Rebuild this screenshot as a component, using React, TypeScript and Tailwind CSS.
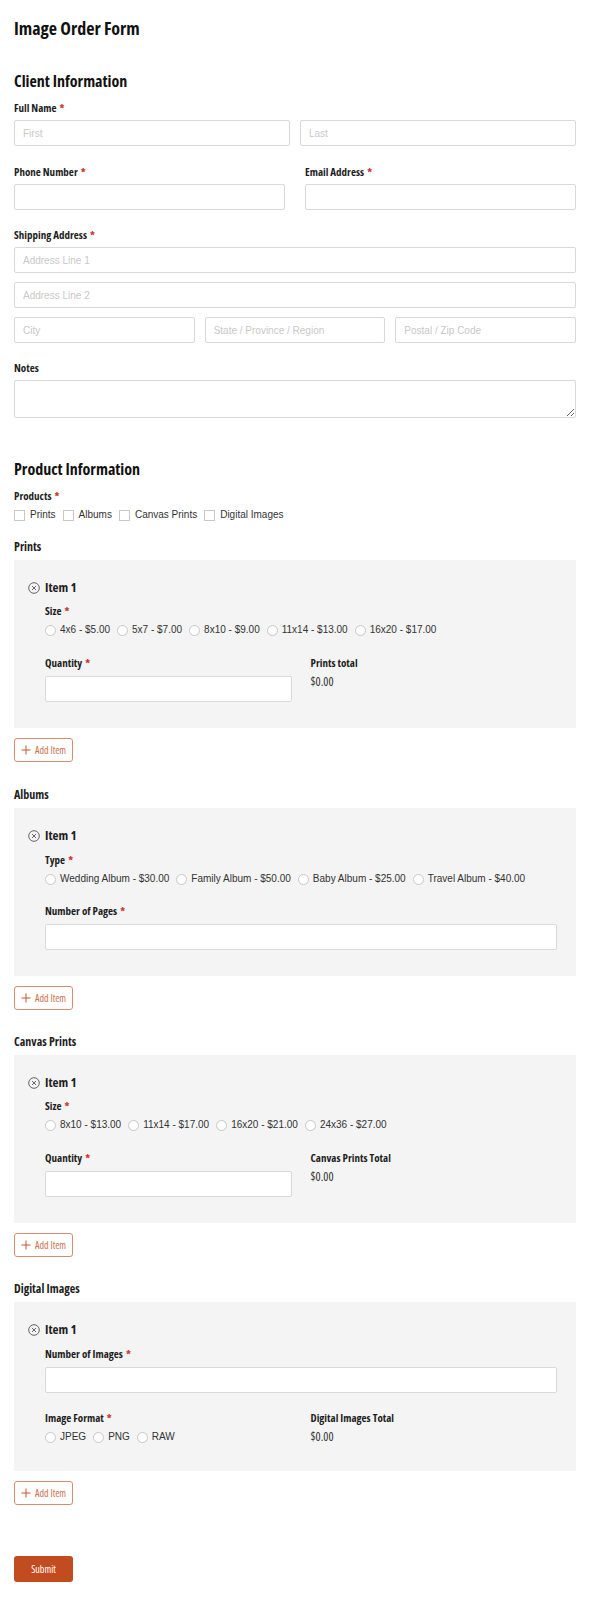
import React from "react";

const cond = "font-['Open_Sans','Liberation_Sans',sans-serif] font-stretch-[75%]";
const arial = "font-['Liberation_Sans','Arial',sans-serif]";

function Label({ text, required = false, className = "" }: { text: string; required?: boolean; className?: string }) {
  return (
    <div className={`${cond} font-bold text-[11px] leading-4 text-[#1e1e1e] ${className}`}>
      {text}
      {required && <span className="text-[#d0312d] ml-[3px]">*</span>}
    </div>
  );
}

function TextInput({ placeholder = "", className = "" }: { placeholder?: string; className?: string }) {
  return (
    <input
      placeholder={placeholder}
      className={`${arial} block w-full h-[26px] bg-white border border-[#d9d9d9] rounded-[2px] px-2 text-[10px] text-[#333] placeholder:text-[#c8c8c8] outline-none ${className}`}
    />
  );
}

function Radio({ label }: { label: string }) {
  return (
    <label className={`${arial} flex shrink-0 items-center whitespace-nowrap text-[10px] leading-[14px] text-[#333] mr-[7px]`}>
      <span className="w-[11px] h-[11px] rounded-full border border-[#c8c8c8] bg-white mr-[4px]" />
      {label}
    </label>
  );
}

function Checkbox({ label }: { label: string }) {
  return (
    <label className={`${arial} flex shrink-0 items-center whitespace-nowrap text-[10px] leading-[14px] text-[#333] mr-[7px]`}>
      <span className="w-[11px] h-[11px] border border-[#c8c8c8] bg-white mr-[5px]" />
      {label}
    </label>
  );
}

function ItemHeader() {
  return (
    <div className="flex items-center h-[18px] pl-[14px]">
      <svg width="12" height="12" viewBox="0 0 12 12" className="mr-[5px]">
        <circle cx="6" cy="6" r="5.3" fill="none" stroke="#555" strokeWidth="0.9" />
        <path d="M4 4 L8 8 M8 4 L4 8" stroke="#555" strokeWidth="0.9" />
      </svg>
      <span className={`${cond} font-bold text-[13px] text-[#1e1e1e]`}>Item 1</span>
    </div>
  );
}

function Total({ label }: { label: string }) {
  return (
    <div>
      <Label text={label} />
      <div className={`${cond} text-[12px] leading-4 text-[#333] mt-[3px]`}>$0.00</div>
    </div>
  );
}

function Panel({ children }: { children: React.ReactNode }) {
  return (
    <div className="bg-[#f4f4f4] pt-[19px] pb-[26px]">
      <ItemHeader />
      <div className="pl-[31px] pr-[19px]">{children}</div>
    </div>
  );
}

function AddItem() {
  return (
    <button className="mt-[10px] flex items-center h-[24px] px-[6px] border border-[#d98b6f] rounded-[3px] bg-white">
      <svg width="10" height="10" viewBox="0 0 10 10" className="mr-[4px]">
        <path d="M5 0.5 V9.5 M0.5 5 H9.5" stroke="#c9552e" strokeWidth="1" />
      </svg>
      <span className={`${cond} text-[10px] text-[#c8704f]`}>Add Item</span>
    </button>
  );
}

function SectionTitle({ text, className = "" }: { text: string; className?: string }) {
  return <div className={`${cond} font-bold text-[12px] leading-4 text-[#1e1e1e] mb-[5px] ${className}`}>{text}</div>;
}

export default function App() {
  return (
    <div className="w-[590px] bg-white px-[14px] pt-[16px] pb-[16px] box-border">
      <h1 className={`${cond} font-bold text-[18px] leading-6 text-[#111]`}>Image Order Form</h1>

      <h2 className={`${cond} font-bold text-[16px] leading-[22px] text-[#111] mt-[30px]`}>Client Information</h2>

      <Label text="Full Name" required className="mt-[8px]" />
      <div className="grid grid-cols-2 gap-[10px] mt-[4px]">
        <TextInput placeholder="First" />
        <TextInput placeholder="Last" />
      </div>

      <div className="grid grid-cols-2 gap-[20px] mt-[18px]">
        <div>
          <Label text="Phone Number" required />
          <TextInput className="mt-[4px]" />
        </div>
        <div>
          <Label text="Email Address" required />
          <TextInput className="mt-[4px]" />
        </div>
      </div>

      <Label text="Shipping Address" required className="mt-[17px]" />
      <div className="flex flex-col gap-[9px] mt-[4px]">
        <TextInput placeholder="Address Line 1" />
        <TextInput placeholder="Address Line 2" />
        <div className="grid grid-cols-3 gap-[10px]">
          <TextInput placeholder="City" />
          <TextInput placeholder="State / Province / Region" />
          <TextInput placeholder="Postal / Zip Code" />
        </div>
      </div>

      <Label text="Notes" className="mt-[17px]" />
      <textarea className="block w-full h-[38px] mt-[4px] bg-white border border-[#d9d9d9] rounded-[2px] outline-none" />

      <h2 className={`${cond} font-bold text-[16px] leading-[22px] text-[#111] mt-[40px]`}>Product Information</h2>

      <Label text="Products" required className="mt-[8px]" />
      <div className="flex items-center mt-[4px]">
        <Checkbox label="Prints" />
        <Checkbox label="Albums" />
        <Checkbox label="Canvas Prints" />
        <Checkbox label="Digital Images" />
      </div>

      {/* Prints */}
      <SectionTitle text="Prints" className="mt-[17px]" />
      <Panel>
        <Label text="Size" required className="mt-[6px]" />
        <div className="flex items-center mt-[4px]">
          <Radio label="4x6 - $5.00" />
          <Radio label="5x7 - $7.00" />
          <Radio label="8x10 - $9.00" />
          <Radio label="11x14 - $13.00" />
          <Radio label="16x20 - $17.00" />
        </div>
        <div className="grid grid-cols-2 gap-[19px] mt-[18px]">
          <div>
            <Label text="Quantity" required />
            <TextInput className="mt-[5px] h-[25px]" />
          </div>
          <Total label="Prints total" />
        </div>
      </Panel>
      <AddItem />

      {/* Albums */}
      <SectionTitle text="Albums" className="mt-[25px]" />
      <Panel>
        <Label text="Type" required className="mt-[7px]" />
        <div className="flex items-center mt-[4px]">
          <Radio label="Wedding Album - $30.00" />
          <Radio label="Family Album - $50.00" />
          <Radio label="Baby Album - $25.00" />
          <Radio label="Travel Album - $40.00" />
        </div>
        <Label text="Number of Pages" required className="mt-[17px]" />
        <TextInput className="mt-[5px] h-[25px]" />
      </Panel>
      <AddItem />

      {/* Canvas prints */}
      <SectionTitle text="Canvas Prints" className="mt-[24px]" />
      <Panel>
        <Label text="Size" required className="mt-[6px]" />
        <div className="flex items-center mt-[4px]">
          <Radio label="8x10 - $13.00" />
          <Radio label="11x14 - $17.00" />
          <Radio label="16x20 - $21.00" />
          <Radio label="24x36 - $27.00" />
        </div>
        <div className="grid grid-cols-2 gap-[19px] mt-[18px]">
          <div>
            <Label text="Quantity" required />
            <TextInput className="mt-[5px] h-[25px]" />
          </div>
          <Total label="Canvas Prints Total" />
        </div>
      </Panel>
      <AddItem />

      {/* Digital images */}
      <SectionTitle text="Digital Images" className="mt-[24px]" />
      <Panel>
        <Label text="Number of Images" required className="mt-[7px]" />
        <TextInput className="mt-[5px] h-[25px]" />
        <div className="grid grid-cols-2 gap-[19px] mt-[17px]">
          <div>
            <Label text="Image Format" required />
            <div className="flex items-center mt-[4px]">
              <Radio label="JPEG" />
              <Radio label="PNG" />
              <Radio label="RAW" />
            </div>
          </div>
          <Total label="Digital Images Total" />
        </div>
      </Panel>
      <AddItem />

      <button className={`${cond} mt-[51px] w-[59px] h-[26px] bg-[#c34b20] rounded-[3px] text-white text-[10px]`}>
        Submit
      </button>
    </div>
  );
}
